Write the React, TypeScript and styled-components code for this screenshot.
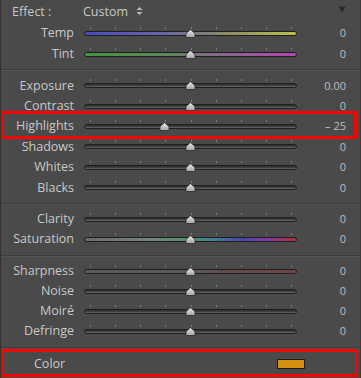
import React from "react";
import styled, { createGlobalStyle, css } from "styled-components";

const GlobalStyle = createGlobalStyle`
  body {
    margin: 0;
    background: #4a4a4a;
  }
`;

type SliderDef = {
  label: string;
  value: string;
  pos: number;
  track?: string;
  marked?: boolean;
};

const TEMP = "linear-gradient(90deg, #4a4ac4 0%, #6868a4 38%, #86866c 62%, #bebe4a 100%)";
const TINT = "linear-gradient(90deg, #3e963a 0%, #5e865a 38%, #86688a 62%, #b046b0 100%)";
const SAT =
  "linear-gradient(90deg, #6a6a6a 0%, #74827a 30%, #4e946a 48%, #3e7c96 62%, #4848b0 74%, #8638aa 86%, #b03232 100%)";
const SHARP = "linear-gradient(90deg, #5a5a5a 0%, #5a5a5a 45%, #684848 75%, #704444 100%)";

const sections: SliderDef[][] = [
  [
    { label: "Temp", value: "0", pos: 0.502, track: TEMP },
    { label: "Tint", value: "0", pos: 0.502, track: TINT },
  ],
  [
    { label: "Exposure", value: "0.00", pos: 0.502 },
    { label: "Contrast", value: "0", pos: 0.502 },
    { label: "Highlights", value: "– 25", pos: 0.376, marked: true },
    { label: "Shadows", value: "0", pos: 0.502 },
    { label: "Whites", value: "0", pos: 0.502 },
    { label: "Blacks", value: "0", pos: 0.502 },
  ],
  [
    { label: "Clarity", value: "0", pos: 0.502 },
    { label: "Saturation", value: "0", pos: 0.502, track: SAT },
  ],
  [
    { label: "Sharpness", value: "0", pos: 0.502, track: SHARP },
    { label: "Noise", value: "0", pos: 0.502 },
    { label: "Moiré", value: "0", pos: 0.502 },
    { label: "Defringe", value: "0", pos: 0.502 },
  ],
];

const rowHeights = [21, 20.4, 20, 20];
const sectionPads = ["0 0 5px", "5px 0 5.6px", "5px 0 6px", "5px 0 6px"];

const UpDownIcon = () => (
  <svg width="7" height="10" viewBox="0 0 7 10">
    <polygon points="0.5,4 3.5,1 6.5,4" fill="#b8b8b8" />
    <polygon points="0.5,6 3.5,9 6.5,6" fill="#b8b8b8" />
  </svg>
);

const ThumbIcon = () => (
  <svg width="11" height="9" viewBox="0 0 11 9">
    <defs>
      <linearGradient id="thumbFill" x1="0" y1="0" x2="0" y2="1">
        <stop offset="0" stopColor="#e8e8e8" />
        <stop offset="1" stopColor="#a4a4a4" />
      </linearGradient>
    </defs>
    <path
      d="M5.5 0.5 L10 4.5 V8.5 H1 V4.5 Z"
      fill="url(#thumbFill)"
      stroke="#2c2c2c"
      strokeWidth="0.8"
    />
  </svg>
);

const Slider = ({ pos, track }: { pos: number; track?: string }) => (
  <SliderWrap>
    <Ticks>
      {Array.from({ length: 9 }).map((_, i) => (
        <Tick key={i} />
      ))}
    </Ticks>
    <Track $fill={track} />
    <Thumb style={{ left: `${pos * 100}%` }}>
      <ThumbIcon />
    </Thumb>
  </SliderWrap>
);

const App = () => {
  return (
    <>
      <GlobalStyle />
      <Panel>
        {sections.map((rows, si) => (
          <Section key={si} $first={si === 0} $pad={sectionPads[si]}>
            {si === 0 && (
              <EffectRow>
                <EffectLabel>Effect :</EffectLabel>
                <Preset>
                  Custom
                  <UpDownIcon />
                </Preset>
                <Collapse>
                  <svg width="8" height="7" viewBox="0 0 8 7">
                    <polygon points="0.5,0.5 7.5,0.5 4,6.5" fill="#2a2a2a" />
                  </svg>
                </Collapse>
              </EffectRow>
            )}
            {rows.map((r) => (
              <Row key={r.label} $h={rowHeights[si]} $marked={r.marked}>
                <Label>{r.label}</Label>
                <Slider pos={r.pos} track={r.track} />
                <Value>{r.value}</Value>
              </Row>
            ))}
          </Section>
        ))}
        <Section $pad="1px 0 0">
          <ColorRow>
            <ColorLabel>Color</ColorLabel>
            <Swatch />
          </ColorRow>
        </Section>
      </Panel>
    </>
  );
};

export default App;

const Panel = styled.div`
  width: 361px;
  height: 378px;
  box-sizing: border-box;
  overflow: hidden;
  background: #4a4a4a;
  border-left: 1px solid #333333;
  border-right: 1px solid #3c3c3c;
  font-family: "Open Sans", "DejaVu Sans", sans-serif;
  color: #c8c8c8;
`;

const Section = styled.div<{ $first?: boolean; $pad: string }>`
  padding: ${({ $pad }) => $pad};
  ${({ $first }) =>
    !$first &&
    css`
      border-top: 1px solid #3a3a3a;
      box-shadow: inset 0 1px 0 #535353;
    `}
`;

const RowGrid = styled.div`
  display: grid;
  grid-template-columns: 73px 213px 1fr;
  column-gap: 10px;
  align-items: center;
  padding-right: 14px;
`;

const EffectRow = styled(RowGrid)`
  height: 22px;
`;

const EffectLabel = styled.div`
  padding-left: 11px;
  font-size: 12.5px;
`;

const Preset = styled.div`
  display: flex;
  align-items: center;
  gap: 8px;
  margin-left: -1px;
  font-size: 12.5px;
`;

const Collapse = styled.div`
  display: flex;
  justify-content: flex-end;
  margin-top: -3px;
`;

const Row = styled(RowGrid)<{ $h: number; $marked?: boolean }>`
  position: relative;
  height: ${({ $h }) => $h}px;

  ${({ $marked }) =>
    $marked &&
    css`
      &::after {
        content: "";
        position: absolute;
        top: -5px;
        bottom: -3px;
        left: 0;
        right: 3px;
        border: 3px solid #ff0000;
        pointer-events: none;
      }
    `}
`;

const Label = styled.div`
  text-align: right;
  font-size: 12.5px;
  white-space: nowrap;
`;

const Value = styled.div`
  text-align: right;
  font-size: 11px;
  color: #bdbdbd;
`;

const SliderWrap = styled.div`
  position: relative;
  display: flex;
  flex-direction: column;
  gap: 2px;
  margin-top: -3px;
`;

const Ticks = styled.div`
  display: flex;
  justify-content: space-between;
  padding: 0 5px 0 6px;
  height: 2px;
`;

const Tick = styled.span`
  width: 1px;
  height: 2px;
  background: #7c7c7c;
`;

const Track = styled.div<{ $fill?: string }>`
  height: 3px;
  border: 1px solid #1f1f1f;
  border-radius: 3px;
  background: ${({ $fill }) =>
    $fill ?? "linear-gradient(180deg, #2c2c2c 0%, #3a3a3a 45%, #6c6c6c 100%)"};
`;

const Thumb = styled.div`
  position: absolute;
  top: 2px;
  width: 11px;
  height: 9px;
  margin-left: -5.5px;
  line-height: 0;
`;

const ColorRow = styled.div`
  display: flex;
  align-items: center;
  height: 28px;
  box-sizing: border-box;
  margin-right: 2px;
  border: 3px solid #ff0000;
  padding: 0 50px 0 30px;
`;

const ColorLabel = styled.div`
  font-size: 12.5px;
  margin-top: 1px;
`;

const Swatch = styled.div`
  margin-left: auto;
  width: 28px;
  height: 10px;
  box-sizing: border-box;
  background: #d4900e;
  border: 1px solid #1c1c1c;
  margin-top: 2px;
`;
